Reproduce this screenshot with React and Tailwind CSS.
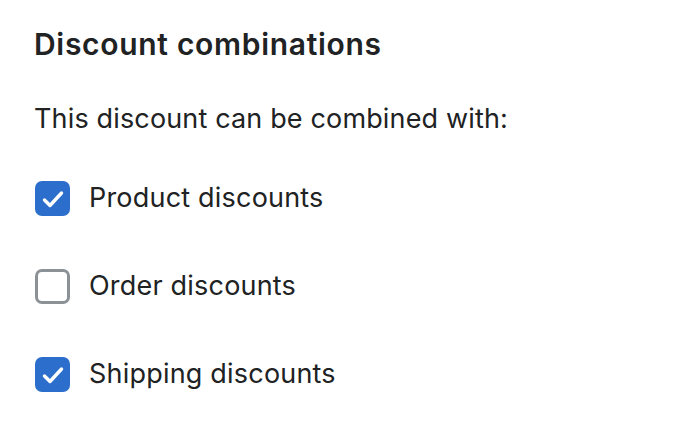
import React from "react";

function Box({ checked }) {
  if (checked) {
    return (
      <div className="w-[35px] h-[35px] rounded-[7px] bg-[#2c6ecb] flex items-center justify-center shrink-0">
        <svg width="24" height="20" viewBox="0 0 24 20" fill="none">
          <path d="M3.5 11l5.5 5.5L20.5 4" stroke="white" strokeWidth="3.4" strokeLinecap="round" strokeLinejoin="round" />
        </svg>
      </div>
    );
  }
  return <div className="w-[35px] h-[35px] rounded-[7px] border-[3px] border-[#8c9196] bg-white shrink-0" />;
}

function Row({ checked, label }) {
  return (
    <div className="flex items-center gap-[19px] h-[35px]">
      <Box checked={checked} />
      <span className="text-[27px] tracking-[0.2px] text-[#202223]">{label}</span>
    </div>
  );
}

export default function App() {
  return (
    <div className="w-[680px] h-[434px] bg-white pl-[34px] pt-[26px]" style={{ fontFamily: "Inter, 'Noto Sans', sans-serif" }}>
      <h2 className="text-[30px] font-semibold tracking-[0.7px] text-[#202223] leading-[36px]">Discount combinations</h2>
      <p className="mt-[39px] text-[27px] tracking-[0.15px] text-[#202223] leading-[36px]">This discount can be combined with:</p>
      <div className="mt-[44px] flex flex-col gap-[53px] pl-[1px]">
        <Row checked label="Product discounts" />
        <Row checked={false} label="Order discounts" />
        <Row checked label="Shipping discounts" />
      </div>
    </div>
  );
}
